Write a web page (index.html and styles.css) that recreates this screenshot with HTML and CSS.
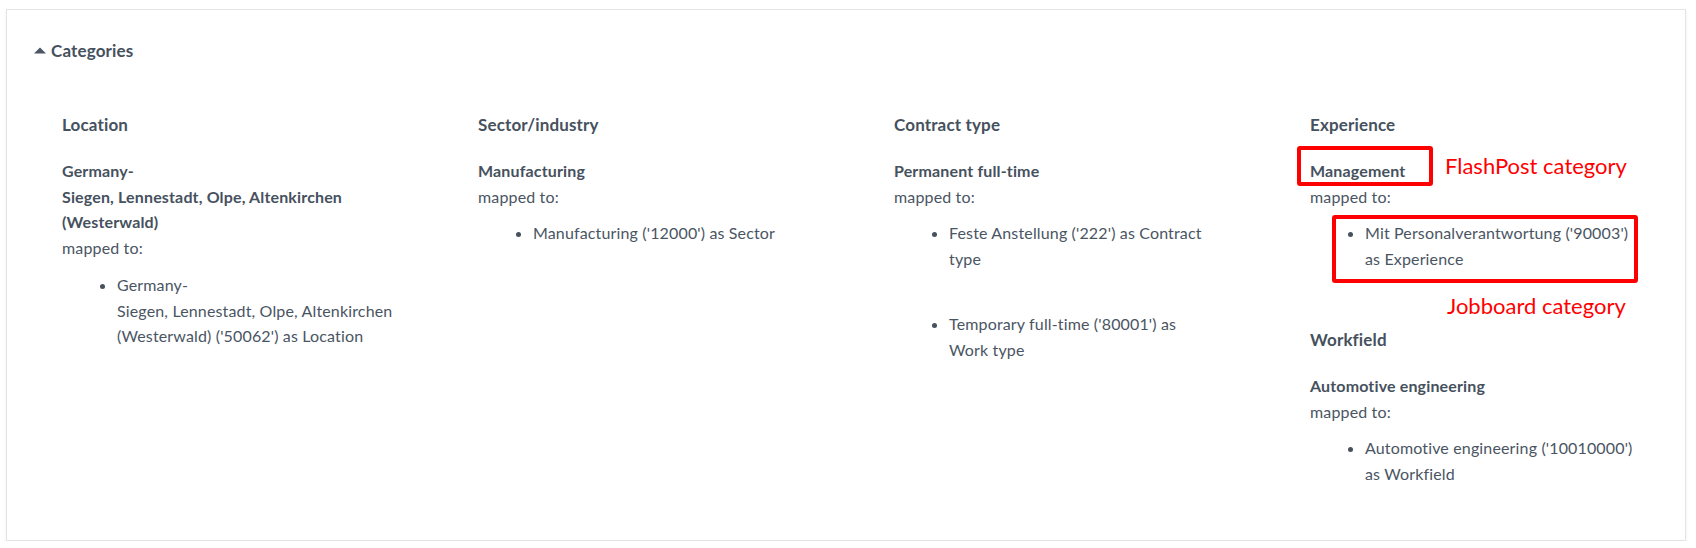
FILE: index.html
```html
<!DOCTYPE html>
<html lang="en">
<head>
<meta charset="utf-8">
<title>Categories</title>
<link rel="stylesheet" href="styles.css">
</head>
<body>
<div class="card">
  <div class="card-header">
    <svg class="caret" width="12" height="7" viewBox="0 0 12 7"><path d="M0 6.5 L6 0.5 L12 6.5 Z" fill="#4b5662"/></svg>
    <span>Categories</span>
  </div>
  <div class="columns">
    <div class="col col-location">
      <section class="category">
        <h3>Location</h3>
        <div class="value">Germany-<br>Siegen, Lennestadt, Olpe, Altenkirchen (Westerwald)</div>
        <div class="mapped">mapped to:</div>
        <ul class="targets">
          <li>Germany-<br>Siegen, Lennestadt, Olpe, Altenkirchen (Westerwald) ('50062') as Location</li>
        </ul>
      </section>
    </div>
    <div class="col col-sector">
      <section class="category">
        <h3>Sector/industry</h3>
        <div class="value">Manufacturing</div>
        <div class="mapped">mapped to:</div>
        <ul class="targets">
          <li>Manufacturing ('12000') as Sector</li>
        </ul>
      </section>
    </div>
    <div class="col col-contract">
      <section class="category">
        <h3>Contract type</h3>
        <div class="value">Permanent full-time</div>
        <div class="mapped">mapped to:</div>
        <ul class="targets">
          <li>Feste Anstellung ('222') as Contract type</li>
          <li>Temporary full-time ('80001') as Work type</li>
        </ul>
      </section>
    </div>
    <div class="col col-experience">
      <section class="category">
        <h3>Experience</h3>
        <div class="value">Management</div>
        <div class="mapped">mapped to:</div>
        <ul class="targets">
          <li>Mit Personalverantwortung ('90003') as Experience</li>
        </ul>
      </section>
      <section class="category">
        <h3>Workfield</h3>
        <div class="value">Automotive engineering</div>
        <div class="mapped">mapped to:</div>
        <ul class="targets">
          <li>Automotive engineering ('10010000') as Workfield</li>
        </ul>
      </section>
    </div>
  </div>
</div>

<div class="mark mark-flash"></div>
<div class="label label-flash">FlashPost category</div>
<div class="mark mark-job"></div>
<div class="label label-job">Jobboard category</div>
</body>
</html>
```

FILE: styles.css
```css
* { box-sizing: border-box; }

html, body {
  margin: 0;
  padding: 0;
  background: #ffffff;
}

body {
  font-family: Lato, "Open Sans", sans-serif;
  font-size: 16px;
  letter-spacing: 0.15px;
  line-height: 25.7px;
  color: #4a5563;
}

.card {
  margin: 9px 10px 0 6px;
  border: 1px solid #e4e4e4;
  box-shadow: 0 2px 4px rgba(0, 0, 0, 0.05);
  padding: 28px 27px 53px 27px;
  background: #fff;
}

.card-header {
  display: flex;
  align-items: center;
  gap: 5px;
  font-size: 17px;
  font-weight: 700;
  line-height: 26px;
  color: #46515e;
}

.caret {
  display: block;
  margin-top: -2px;
}

.columns {
  display: grid;
  grid-template-columns: repeat(4, 340px);
  column-gap: 76px;
  margin: 48px 0 0 28px;
}

.category + .category {
  margin-top: 55px;
}

.category h3 {
  margin: 0 0 20px 0;
  font-size: 17px;
  line-height: 26px;
  font-weight: 700;
  color: #46515e;
}

.value {
  font-weight: 700;
  color: #46515e;
}

.targets {
  margin: 11px 0 0 0;
  padding: 0 0 0 55px;
}

.col-location .targets { width: 335px; }
.col-contract .targets { width: 317px; }
.col-experience .targets { width: 327px; }

.targets li + li {
  margin-top: 39px;
}

.targets li::marker {
  color: #46515e;
}

.mark {
  position: absolute;
  border: 4px solid #ff0000;
  border-radius: 3px;
}

.mark-flash {
  left: 1297px;
  top: 146px;
  width: 136px;
  height: 40px;
}

.mark-job {
  left: 1332px;
  top: 215px;
  width: 306px;
  height: 68px;
}

.label {
  position: absolute;
  font-family: Lato, "Open Sans", sans-serif;
  font-size: 22px;
  line-height: 26px;
  letter-spacing: 0;
  color: #ff0000;
  white-space: nowrap;
}

.label-flash {
  left: 1445px;
  top: 153px;
}

.label-job {
  left: 1447px;
  top: 293px;
}
```
